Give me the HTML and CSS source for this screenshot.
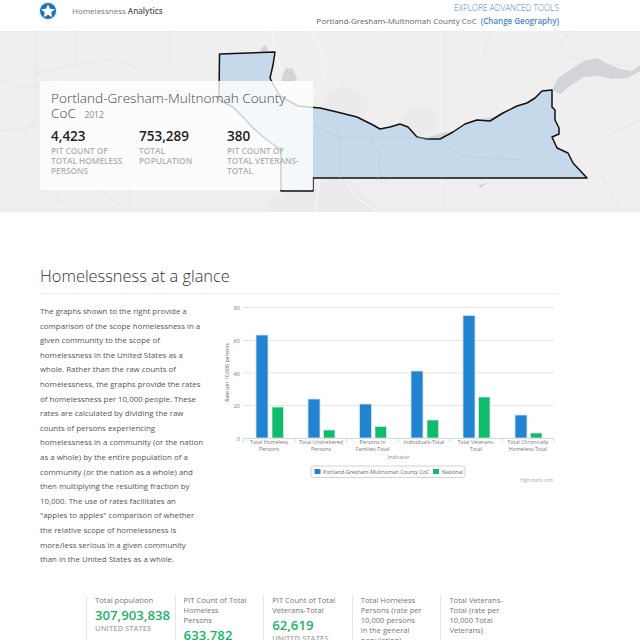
FILE: index.html
```html
<!DOCTYPE html>
<html lang="en">
<head>
    <meta charset="UTF-8">
    <meta name="viewport" content="width=device-width, initial-scale=1.0">
    <title>Homelessness Analytics</title>
    <link rel="stylesheet" href="styles.css">
</head>
<body>
    <header class="topbar">
        <div class="brand">
            <svg class="brand-logo" width="20" height="20" viewBox="0 0 20 20">
                <circle cx="10" cy="10" r="9.5" fill="#eef1f4"/>
                <circle cx="10" cy="10" r="8" fill="#1c73bd"/>
                <path d="M10 3.2l2 4.5 4.9.5-3.7 3.2 1.1 4.8-4.3-2.5-4.3 2.5 1.1-4.8-3.7-3.2 4.9-.5z" fill="#fff"/>
            </svg>
            <span class="brand-name">Homelessness <b>Analytics</b></span>
        </div>
        <div class="topbar-links">
            <a class="advanced-link">EXPLORE ADVANCED TOOLS</a>
            <div class="geo-line">Portland-Gresham-Multnomah County CoC <a class="geo-link">(Change Geography)</a></div>
        </div>
    </header>

    <section class="hero">
        <svg class="hero-map" width="640" height="181" viewBox="0 31 640 181">
            <rect x="0" y="31" width="640" height="181" fill="#efefef"/>
            <!-- urban areas -->
            <path class="urban" d="M266 212l6-14 14-6 28-2 16-12 26 4 10 14 16 16zM372 178l14 8 6-8z"/>
            <path class="urban" d="M320 110l8-18 14-6 18 6 10 12-6 12-20-2zM400 118l8-8 18-4 12 8 2 14-20 8z"/>
            <!-- county lines and roads -->
            <path class="county" d="M0 80l30 8 16-4 20 6M36 31v40l12 10M76 31v34l-40 8v34l-2 20-34 4M76 65l36-6 30 10"/>
            <path class="county" d="M444.500 31v105M445 178v34M572 31l-12 10 8 14 28 8 44 4M640 120l-30 14-20 26 20 30 10 22"/>
            <path class="county" d="M42 190l40 22M130 190v22M170 31v32M100 190l30 22M490 31l-6 20 8 14-14 24"/>
            <path class="road" d="M272 31l2 16 6 20 14 22 16 12 12 26M320 178l-5 34M344 178l12 20 24 14M312 98l14-28-8-26-6-13"/>
            <!-- water -->
            <path class="water" d="M552 90l6-12 12-8 14-9 14-3 8 5 14 6 12 2 8-6v6l-12 7-16 1-14-3-14 1-14 9-10 8z"/>
            <path class="water" d="M258 62l3-14 5-3 4 11-2 8-8 0zM282 76l4-8 7 1 4 10-4 3-11 0z"/>
            <path class="water" d="M460 128l13-8 20-3 12-6-10 10-15 2-16 7zM340 118l20 10-14-2zM425 138l25-7-12 9zM500 166l12-3-9 5zM478 186l10-4-7 6z"/>
            <!-- community boundary -->
            <path class="boundary" d="M219.500 54L275 52l-2 13-3 13 2 4 8 14 18 10 22 2 17 4 20 5 16 8 7 4 10-2 10-3 8 3 9 10 10 2h13l13-7 12-8 12-4 13 1 13-8 14-7 10-3 8-5 7-7 10-1v17l3 3v10l4 8v6l-7 3 5 11 11 5 5 10 14 15H313v13h-32v-41l-14-10-14-12-10-11-10-10-14-7z"/>
            <path class="inner-road" d="M340 178v-40l-8-16M340 138h90M370 140l10 14-2 24M300 120l40 18M440 140l20 16 60 4"/>
        </svg>
        <div class="summary-card">
            <h2 class="summary-title">Portland-Gresham-Multnomah County CoC <small>2012</small></h2>
            <div class="summary-stats">
                <div class="summary-stat">
                    <div class="summary-num">4,423</div>
                    <div class="summary-label">PIT Count of Total Homeless Persons</div>
                </div>
                <div class="summary-stat">
                    <div class="summary-num">753,289</div>
                    <div class="summary-label">Total Population</div>
                </div>
                <div class="summary-stat">
                    <div class="summary-num">380</div>
                    <div class="summary-label">PIT Count of Total Veterans-Total</div>
                </div>
            </div>
        </div>
    </section>

    <main class="content">
        <h1 class="section-title">Homelessness at a glance</h1>
        <div class="glance">
            <p class="glance-text">The graphs shown to the right provide a comparison of the scope homelessness in a given community to the scope of homelessness in the United States as a whole. Rather than the raw counts of homelessness, the graphs provide the rates of homelessness per 10,000 people. These rates are calculated by dividing the raw counts of persons experiencing homelessness in a community (or the nation as a whole) by the entire population of a community (or the nation as a whole) and then multiplying the resulting fraction by 10,000. The use of rates facilitates an "apples to apples" comparison of whether the relative scope of homelessness is more/less serious in a given community than in the United States as a whole.</p>
            <svg class="chart" width="345" height="200" viewBox="215 295 345 200">
                <g class="grid">
                    <path d="M243 308.500h311M243 341.500h311M243 374h311M243 406.500h311"/>
                </g>
                <path class="axis" d="M243 439.500h311M243 439.500v4M295 439.500v4M346.500 439.500v4M398.500 439.500v4M450 439.500v4M502 439.500v4M554 439.500v4"/>
                <g class="axis-num">
                    <text x="240" y="311">80</text>
                    <text x="240" y="344">60</text>
                    <text x="240" y="376.500">40</text>
                    <text x="240" y="409">20</text>
                    <text x="240" y="441.500">0</text>
                </g>
                <text class="axis-title" transform="translate(229 373.500) rotate(-90)">Rate per 10,000 persons</text>
                <g class="bars-blue">
                    <rect x="256" y="336" width="12" height="103"/>
                    <rect x="308" y="400" width="12" height="39"/>
                    <rect x="359.500" y="405" width="12" height="34"/>
                    <rect x="411" y="372" width="12" height="67"/>
                    <rect x="463" y="316.500" width="12" height="122.500"/>
                    <rect x="515" y="416" width="12" height="23"/>
                </g>
                <g class="bars-green">
                    <rect x="272" y="408" width="11.500" height="31"/>
                    <rect x="323.500" y="431" width="11.500" height="8"/>
                    <rect x="375" y="427.500" width="11.500" height="11.500"/>
                    <rect x="427" y="421" width="11.500" height="18"/>
                    <rect x="478.500" y="398" width="11.500" height="41"/>
                    <rect x="530.500" y="434" width="11.500" height="5"/>
                </g>
                <g class="cat-label">
                    <text x="269" y="445">Total Homeless</text><text x="269" y="452">Persons</text>
                    <text x="321" y="445">Total Unsheltered</text><text x="321" y="452">Persons</text>
                    <text x="372.500" y="445">Persons in</text><text x="372.500" y="452">Families-Total</text>
                    <text x="424" y="445">Individuals-Total</text>
                    <text x="476" y="445">Total Veterans-</text><text x="476" y="452">Total</text>
                    <text x="528" y="445">Total Chronically</text><text x="528" y="452">Homeless-Total</text>
                </g>
                <text class="axis-indicator" x="398.500" y="459.500">Indicator</text>
                <rect class="legend-box" x="311" y="467" width="154" height="11.500" rx="2"/>
                <rect class="legend-blue" x="314.500" y="470" width="6" height="5"/>
                <text class="legend-text" x="323" y="475">Portland-Gresham-Multnomah County CoC</text>
                <rect class="legend-green" x="433" y="470" width="6" height="5"/>
                <text class="legend-text" x="442" y="475">National</text>
                <text class="credits" x="553" y="483">Highcharts.com</text>
            </svg>
        </div>

        <div class="rates">
            <div class="rate">
                <div class="rate-name">Total population</div>
                <div class="rate-num">307,903,838</div>
                <div class="rate-place">United States</div>
            </div>
            <div class="rate">
                <div class="rate-name">PIT Count of Total<br>Homeless<br>Persons</div>
                <div class="rate-num">633,782</div>
                <div class="rate-place">United States</div>
            </div>
            <div class="rate">
                <div class="rate-name">PIT Count of Total<br>Veterans-Total</div>
                <div class="rate-num">62,619</div>
                <div class="rate-place">United States</div>
            </div>
            <div class="rate">
                <div class="rate-name">Total Homeless<br>Persons (rate per<br>10,000 persons<br>in the general<br>population)</div>
            </div>
            <div class="rate">
                <div class="rate-name">Total Veterans-<br>Total (rate per<br>10,000 Total<br>Veterans)</div>
            </div>
        </div>
    </main>
</body>
</html>
```

FILE: styles.css
```css
html, body {
    margin: 0;
    height: 640px;
    overflow: hidden;
}
body {
    font-family: "Open Sans", sans-serif;
    background-color: #fff;
    color: #666;
}
.topbar {
    display: flex;
    justify-content: space-between;
    height: 31px;
    padding: 0 81px 0 38px;
}
.brand {
    display: flex;
    align-items: flex-start;
    gap: 14px;
    padding-top: 1px;
}
.brand-name {
    font-size: 8px;
    line-height: 20px;
    color: #777;
}
.brand-name b {
    font-weight: 600;
    color: #555;
}
.topbar-links {
    text-align: right;
    font-size: 8px;
    padding-top: 2px;
}
.advanced-link {
    display: block;
    font-size: 8.200px;
    font-weight: 300;
    line-height: 11px;
    color: #4f7fd0;
}
.geo-line {
    line-height: 16px;
    color: #666;
}
.geo-link {
    margin-left: 2px;
    font-weight: 600;
    color: #4a86d0;
}
.hero {
    position: relative;
    height: 181px;
}
.hero-map {
    display: block;
}
.urban { fill: #ebebeb; }
.water { fill: #d4d4d8; }
.county { fill: none; stroke: #e3e3e3; stroke-width: 0.7; }
.road { fill: none; stroke: #f9f9f9; stroke-width: 1; }
.inner-road { fill: none; stroke: #b8ccdc; stroke-width: 0.7; }
.boundary {
    fill: #c5d9ea;
    stroke: #111;
    stroke-width: 1.500;
    stroke-linejoin: round;
}
.summary-card {
    position: absolute;
    left: 40px;
    top: 50px;
    width: 251px;
    height: 87px;
    padding: 9px 11px 13px;
    background-color: rgba(255, 255, 255, 0.8);
}
.summary-title {
    margin: 0;
    font-size: 13.6px;
    font-weight: 300;
    line-height: 15px;
    color: #444;
}
.summary-title small {
    margin-left: 5px;
    font-size: 8.5px;
    font-weight: 400;
    line-height: 1;
    color: #888;
}
.summary-stats {
    display: grid;
    grid-template-columns: 88px 88px 78px;
    margin-top: 8px;
}
.summary-num {
    font-size: 13.5px;
    font-weight: 600;
    line-height: 16px;
    color: #222;
}
.summary-label {
    max-width: 76px;
    margin-top: 2px;
    font-size: 8.3px;
    font-weight: 600;
    line-height: 10px;
    text-transform: uppercase;
    color: #b0b0b0;
}
.content {
    padding: 52px 81px 0 40px;
}
.section-title {
    margin: 0;
    padding-bottom: 5px;
    border-bottom: 1px solid #eee;
    font-size: 16.400px;
    font-weight: 300;
    line-height: 24px;
    color: #333;
}
.glance {
    display: flex;
    justify-content: space-between;
    height: 301px;
}
.glance-text {
    width: 164px;
    margin: 10px 0 0;
    font-size: 7.9px;
    line-height: 14.6px;
    color: #555;
}
.chart {
    display: block;
    margin-right: -1px;
}
.grid path { fill: none; stroke: #e6e6e6; stroke-width: 1; }
.axis { fill: none; stroke: #c0d0e0; stroke-width: 0.8; }
.axis-num text {
    font-size: 5.5px;
    text-anchor: end;
    fill: #777;
}
.axis-title {
    font-size: 5.2px;
    text-anchor: middle;
    fill: #4d5f75;
}
.bars-blue rect {
    fill: #2184d0;
    stroke: #dde3e8;
    stroke-width: 0.8;
}
.bars-green rect {
    fill: #0fbc6b;
    stroke: #dde3e0;
    stroke-width: 0.8;
}
.cat-label text {
    font-size: 5.3px;
    text-anchor: middle;
    fill: #777;
}
.axis-indicator {
    font-size: 5.3px;
    text-anchor: middle;
    fill: #888;
}
.legend-box { fill: #fff; stroke: #c8c8c8; stroke-width: 0.8; }
.legend-blue { fill: #2184d0; }
.legend-green { fill: #0fbc6b; }
.legend-text {
    font-size: 5.3px;
    fill: #666;
}
.credits {
    font-size: 4.5px;
    text-anchor: end;
    fill: #aaa;
}
.rates {
    display: flex;
    margin-left: 46px;
}
.rate {
    width: 79.600px;
    padding: 0 0 0 8px;
    border-left: 1px solid #e6e6e6;
}
.rate-name {
    font-size: 7.6px;
    line-height: 10px;
    color: #777;
}
.rate-num {
    margin-top: 2px;
    font-size: 13.200px;
    font-weight: 600;
    line-height: 16px;
    color: #1ab567;
}
.rate-place {
    font-size: 7.6px;
    font-weight: 600;
    line-height: 10px;
    text-transform: uppercase;
    color: #aaa;
}
```
